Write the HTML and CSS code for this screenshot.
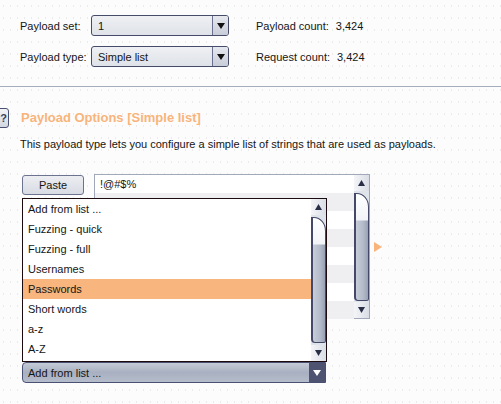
FILE: index.html
```html
<!DOCTYPE html>
<html>
<head>
<meta charset="utf-8">
<link rel="stylesheet" href="styles.css">
</head>
<body>
<div class="top">
  <div class="lbl">Payload set:</div>
  <div class="select"><span class="sel-text">1</span><span class="sel-btn"><svg width="8" height="6" viewBox="0 0 8 6"><path d="M0 0H8L4 6Z" fill="#111"/></svg></span></div>
  <div></div>
  <div class="lbl">Payload count:<span class="val">3,424</span></div>
  <div class="lbl">Payload type:</div>
  <div class="select"><span class="sel-text">Simple list</span><span class="sel-btn"><svg width="8" height="6" viewBox="0 0 8 6"><path d="M0 0H8L4 6Z" fill="#111"/></svg></span></div>
  <div></div>
  <div class="lbl">Request count:<span class="val">3,424</span></div>
</div>
<div class="divider"></div>
<div class="section-head">
  <div class="help">?</div>
  <div class="title">Payload Options [Simple list]</div>
</div>
<div class="desc">This payload type lets you configure a simple list of strings that are used as payloads.</div>
<div class="editor">
  <div class="editor-row">
    <div class="btn">Paste</div>
    <div class="listbox">
      <div class="rows">
        <div class="row">!@#$%</div>
        <div class="row alt"></div>
        <div class="row"></div>
        <div class="row alt"></div>
        <div class="row"></div>
        <div class="row alt"></div>
        <div class="row"></div>
        <div class="row alt"></div>
      </div>
      <div class="vscroll outer-scroll">
        <div class="arrow up"><svg width="7" height="6" viewBox="0 0 7 6"><path d="M3.5 0L7 6H0Z" fill="#2a2f48"/></svg></div>
        <div class="track"><div class="thumb"></div></div>
        <div class="arrow down"><svg width="7" height="6" viewBox="0 0 7 6"><path d="M0 0H7L3.5 6Z" fill="#2a2f48"/></svg></div>
      </div>
    </div>
    <div class="pointer"></div>
  </div>
  <div class="combo">
    <span class="combo-text">Add from list ...</span>
    <span class="combo-btn"><svg width="8" height="6" viewBox="0 0 8 6"><path d="M0 0H8L4 6Z" fill="#fff"/></svg></span>
  </div>
  <div class="popup">
    <div class="items">
      <div class="item">Add from list ...</div>
      <div class="item">Fuzzing - quick</div>
      <div class="item">Fuzzing - full</div>
      <div class="item">Usernames</div>
      <div class="item active">Passwords</div>
      <div class="item">Short words</div>
      <div class="item">a-z</div>
      <div class="item">A-Z</div>
    </div>
    <div class="vscroll inner-scroll">
      <div class="arrow up"><svg width="7" height="6" viewBox="0 0 7 6"><path d="M3.5 0L7 6H0Z" fill="#2a2f48"/></svg></div>
      <div class="track"><div class="thumb"></div></div>
      <div class="arrow down"><svg width="7" height="6" viewBox="0 0 7 6"><path d="M0 0H7L3.5 6Z" fill="#2a2f48"/></svg></div>
    </div>
  </div>
</div>
</body>
</html>
```
FILE: styles.css
```css
html, body {
  margin: 0;
  padding: 0;
}
body {
  width: 501px;
  height: 404px;
  overflow: hidden;
  font-family: "Liberation Sans", Arial, sans-serif;
  font-size: 11px;
  color: #151515;
  background-color: #fcfcfc;
  background-image: radial-gradient(circle, #ebebeb 0.6px, transparent 1px);
  background-size: 7px 12px;
}
.top {
  display: grid;
  grid-template-columns: 71px 138px 27px auto;
  grid-auto-rows: 21px;
  row-gap: 10px;
  padding: 15px 0 0 20px;
}
.lbl {
  display: flex;
  align-items: center;
  white-space: nowrap;
}
.val {
  margin-left: 7px;
}
.select {
  display: flex;
  align-items: stretch;
  border: 1px solid #454b68;
  border-radius: 3px;
  background: linear-gradient(#eef0f3, #dfe2e8);
  overflow: hidden;
}
.sel-text {
  flex: 1;
  display: flex;
  align-items: center;
  padding-left: 6px;
}
.sel-btn {
  width: 15px;
  border-left: 1px solid #6a7190;
  background: linear-gradient(#e6e8ee, #c9cdd8);
  display: flex;
  align-items: center;
  justify-content: center;
}
.divider {
  margin-top: 19px;
  height: 1px;
  background: #a4acbe;
}
.section-head {
  display: flex;
  align-items: center;
  margin-top: 21px;
  height: 20px;
}
.help {
  width: 20px;
  height: 18px;
  margin-left: -14px;
  margin-right: 12px;
  border: 1px solid #4a5072;
  border-radius: 3px;
  background: linear-gradient(#f3f4f7, #d3d7e0);
  color: #3a3f5a;
  font-weight: bold;
  font-size: 11px;
  display: flex;
  align-items: center;
  justify-content: flex-end;
  padding-right: 1px;
  box-sizing: content-box;
}
.title {
  font-size: 13px;
  font-weight: bold;
  color: #f8b47b;
  line-height: 16px;
}
.desc {
  margin-top: 9px;
  padding-left: 20px;
  height: 14px;
  line-height: 14px;
}
.editor {
  position: relative;
  margin-top: 23px;
  padding-left: 22px;
}
.editor-row {
  display: flex;
  align-items: flex-start;
}
.btn {
  width: 60px;
  height: 18px;
  margin-top: 1px;
  border: 1px solid #6c7390;
  border-radius: 3px;
  background: linear-gradient(#eceef2, #d8dbe3);
  display: flex;
  align-items: center;
  justify-content: center;
}
.listbox {
  margin-left: 10px;
  width: 274px;
  height: 143px;
  border: 1px solid #a0a8ba;
  background: #fff;
  display: flex;
}
.rows {
  flex: 1;
}
.row {
  height: 18px;
  line-height: 18px;
  padding-left: 5px;
}
.row.alt {
  background: #efeff1;
}
.vscroll {
  width: 15px;
  display: flex;
  flex-direction: column;
  background: #dfe3ea;
}
.arrow {
  height: 16px;
  background: linear-gradient(to right, #f4f5f8, #d9dde5);
  display: flex;
  align-items: center;
  justify-content: center;
}
.track {
  flex: 1;
  display: flex;
  flex-direction: column;
  padding: 2px 0;
}
.thumb {
  flex: 1;
  border-radius: 0 12px 2px 4px / 0 14px 2px 4px;
  border: 1px solid #44496a;
  border-left-width: 2px;
  background:
    linear-gradient(to bottom, #ffffff 0, #f2f4f7 26px, transparent 27px),
    linear-gradient(to right, #c8cdd8, #b3bac9 60%, #98a1b4);
}
.outer-scroll .track {
  padding: 2px 0 1px;
}
.pointer {
  margin-top: 68px;
  margin-left: 4px;
  width: 0;
  height: 0;
  border-top: 5px solid transparent;
  border-bottom: 5px solid transparent;
  border-left: 8px solid #f8b47b;
}
.combo {
  margin-top: 43px;
  width: 302px;
  height: 19px;
  border: 1px solid #4a5072;
  border-radius: 4px 0 0 4px;
  background: linear-gradient(#c4cad6, #a8b0c1 50%, #b5bccb);
  display: flex;
  overflow: hidden;
}
.combo-text {
  flex: 1;
  display: flex;
  align-items: center;
  padding-left: 5px;
}
.combo-btn {
  width: 16px;
  background: #4e5372;
  display: flex;
  align-items: center;
  justify-content: center;
}
.popup {
  position: absolute;
  left: 22px;
  top: 24px;
  width: 303px;
  height: 162px;
  border: 1px solid #1c0b0e;
  background: #fff;
  display: flex;
}
.items {
  flex: 1;
}
.item {
  height: 20px;
  line-height: 20px;
  padding-left: 5px;
}
.item.active {
  background: #f8b57d;
}
.inner-scroll {
  width: 15px;
}
```
